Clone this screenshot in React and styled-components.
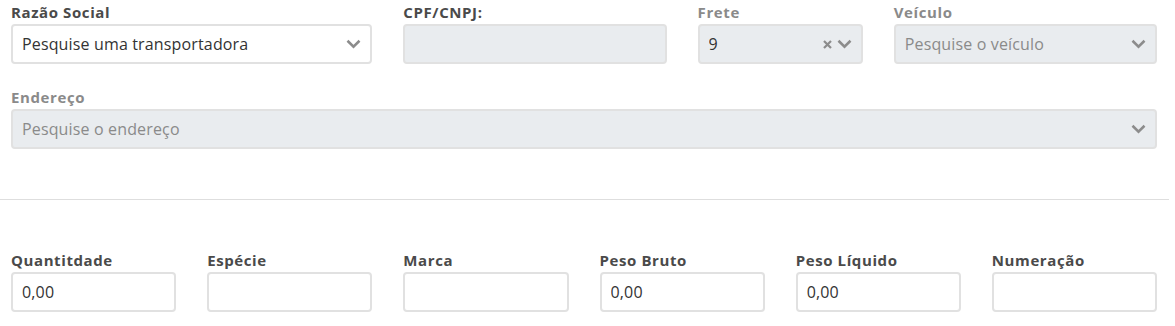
import React from "react";
import styled, { createGlobalStyle } from "styled-components";

const Global = createGlobalStyle`
  html, body { margin: 0; padding: 0; background: #fff; }
  body { font-family: "Open Sans", "Liberation Sans", sans-serif; }
  * { box-sizing: border-box; }
`;

const Page = styled.div`
  width: 1175px;
  padding-top: 3px;
`;

const Grid = styled.div`
  display: grid;
  grid-template-columns: repeat(12, 1fr);
  column-gap: 31px;
  row-gap: 24px;
  padding: 0 18px 0 11px;
`;

const Field = styled.div`
  grid-column: span ${(p) => p.span};
  display: flex;
  flex-direction: column;
  gap: 3px;
`;

const Label = styled.label`
  font-size: 15px;
  font-weight: 700;
  line-height: 18px;
  color: ${(p) => (p.muted ? "#8a8a8a" : "#4a4a4a")};
  letter-spacing: 0.6px;
`;

const Box = styled.div`
  height: 40px;
  border: 2px solid #e1e1e1;
  border-radius: 4px;
  background: ${(p) => (p.disabled ? "#e9ecef" : "#fff")};
  display: flex;
  align-items: center;
  padding: 0 9px 0 9px;
  font-size: 16px;
  letter-spacing: 0.15px;
  color: ${(p) => (p.placeholder ? "#8a8a8a" : "#333")};
`;

const Value = styled.span`
  flex: 1;
  white-space: nowrap;
  overflow: hidden;
`;

const Icons = styled.span`
  display: flex;
  align-items: center;
  gap: 5px;
  color: #8c8c8c;
`;

const Divider = styled.hr`
  border: none;
  border-top: 1px solid #dedede;
  margin: 50px 6px 51px 0;
`;

const Chevron = () => (
  <svg width="15" height="10" viewBox="0 0 15 10">
    <path d="M1.5 1.8 L7.5 7.6 L13.5 1.8" fill="none" stroke="#8c8c8c" strokeWidth="2.6" />
  </svg>
);

const Cross = () => (
  <svg width="9" height="9" viewBox="0 0 9 9">
    <path d="M1 1 L8 8 M8 1 L1 8" stroke="#8c8c8c" strokeWidth="2.2" />
  </svg>
);

const Select = ({ value, placeholder, disabled, clear }) => (
  <Box disabled={disabled} placeholder={placeholder ? 1 : 0}>
    <Value>{value || placeholder}</Value>
    <Icons>
      {clear && <Cross />}
      <Chevron />
    </Icons>
  </Box>
);

export default function App() {
  return (
    <Page>
      <Global />
      <Grid>
        <Field span={4}>
          <Label>Razão Social</Label>
          <Box>
            <Value>Pesquise uma transportadora</Value>
            <Icons><Chevron /></Icons>
          </Box>
        </Field>
        <Field span={3}>
          <Label>CPF/CNPJ:</Label>
          <Box disabled />
        </Field>
        <Field span={2}>
          <Label muted>Frete</Label>
          <Select value="9" disabled clear />
        </Field>
        <Field span={3}>
          <Label muted>Veículo</Label>
          <Select placeholder="Pesquise o veículo" disabled />
        </Field>
        <Field span={12}>
          <Label muted>Endereço</Label>
          <Select placeholder="Pesquise o endereço" disabled />
        </Field>
      </Grid>
      <Divider />
      <Grid>
        {[
          ["Quantitdade", "0,00"],
          ["Espécie", ""],
          ["Marca", ""],
          ["Peso Bruto", "0,00"],
          ["Peso Líquido", "0,00"],
          ["Numeração", ""],
        ].map(([l, v]) => (
          <Field span={2} key={l}>
            <Label>{l}</Label>
            <Box><Value>{v}</Value></Box>
          </Field>
        ))}
      </Grid>
    </Page>
  );
}
